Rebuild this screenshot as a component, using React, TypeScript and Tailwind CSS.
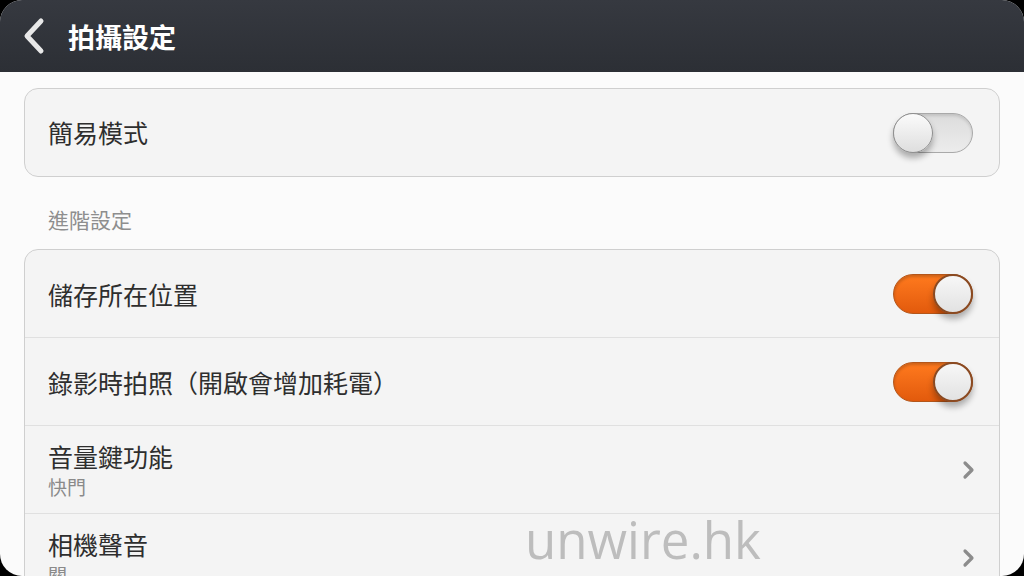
const cjk = "font-['Noto_Sans_CJK_TC','Noto_Sans_CJK_SC',sans-serif]";

function Toggle({ on }: { on: boolean }) {
  if (on) {
    return (
      <div className="relative h-[40px] w-[80px] rounded-full border border-[#b4561a] bg-gradient-to-b from-[#ff7a1e] to-[#e25a0c] shadow-[inset_0_2px_3px_rgba(0,0,0,0.2)]">
        <div className="absolute right-[-1px] top-[-1px] h-[40px] w-[40px] rounded-full border-2 border-[#8a4a22] bg-gradient-to-b from-[#f7f7f7] to-[#e2e2e2] shadow-[0_5px_6px_rgba(0,0,0,0.3)]" />
      </div>
    );
  }
  return (
    <div className="relative h-[40px] w-[80px] rounded-full border border-[#a9a9a9] bg-gradient-to-b from-[#dcdcdc] to-[#ececec] shadow-[inset_0_2px_3px_rgba(0,0,0,0.12)]">
      <div className="absolute left-[-1px] top-[-1px] h-[40px] w-[40px] rounded-full border border-[#8f8f8f] bg-gradient-to-b from-[#fbfbfb] to-[#dedede] shadow-[0_5px_6px_rgba(0,0,0,0.3)]" />
    </div>
  );
}

function Chevron() {
  return (
    <svg width="16" height="20" viewBox="0 0 16 20">
      <path d="M5 3 L12 10 L5 17" fill="none" stroke="#8c8c8c" strokeWidth="3.2" strokeLinecap="round" strokeLinejoin="round" />
    </svg>
  );
}

function Row({ title, sub, right, chevron, last }: { title: string; sub?: string; right: React.ReactNode; chevron?: boolean; last?: boolean }) {
  return (
    <div className={`flex h-[88px] shrink-0 items-center justify-between pl-[23px] ${chevron ? "pr-[23px]" : "pr-[26px]"} ${last ? "" : "border-b border-[#e0e0e0]"}`}>
      <div className="flex flex-col">
        <span className="text-[25px] leading-[34px] text-[#2e2e2e]">{title}</span>
        {sub && <span className="text-[19px] leading-[28px] text-[#8a8a8a]">{sub}</span>}
      </div>
      {right}
    </div>
  );
}

export default function App() {
  return (
    <div className="h-[576px] w-[1024px] overflow-hidden bg-black">
      <div className={`relative flex h-[576px] w-[1024px] flex-col overflow-hidden rounded-[22px] bg-[#fbfbfb] ${cjk}`}>
        <header className="flex h-[72px] shrink-0 items-center bg-gradient-to-b from-[#363940] to-[#2c2f35]">
          <svg width="30" height="40" viewBox="0 0 30 40" className="ml-[20px]">
            <path d="M21 5 L7 20 L21 35" fill="none" stroke="#e8e8e8" strokeWidth="5" strokeLinecap="round" strokeLinejoin="round" />
          </svg>
          <h1 className="ml-[18px] text-[27px] font-bold leading-none text-white">拍攝設定</h1>
        </header>

        <div className="flex flex-col px-[24px] pt-[16px]">
          <div className="flex h-[89px] items-center justify-between rounded-[14px] border border-[#cfcfcf] bg-[#f4f4f4] pl-[23px] pr-[26px]">
            <span className="text-[25px] text-[#2e2e2e]">簡易模式</span>
            <Toggle on={false} />
          </div>

          <div className="flex h-[72px] items-center pl-[24px] pt-[14px] text-[21px] text-[#8e8e8e]">進階設定</div>

          <div className="flex flex-col rounded-[14px] border border-[#cfcfcf] bg-[#f4f4f4]">
            <Row title="儲存所在位置" right={<Toggle on />} />
            <Row title="錄影時拍照（開啟會增加耗電）" right={<Toggle on />} />
            <Row title="音量鍵功能" sub="快門" right={<Chevron />} chevron />
            <Row title="相機聲音" sub="關" right={<Chevron />} chevron last />
          </div>
        </div>

        <div className="pointer-events-none absolute left-[525px] top-[514px] font-['Open_Sans',sans-serif] text-[51px] leading-none text-[#bdbdbd]">
          unwire.hk
        </div>
      </div>
    </div>
  );
}
